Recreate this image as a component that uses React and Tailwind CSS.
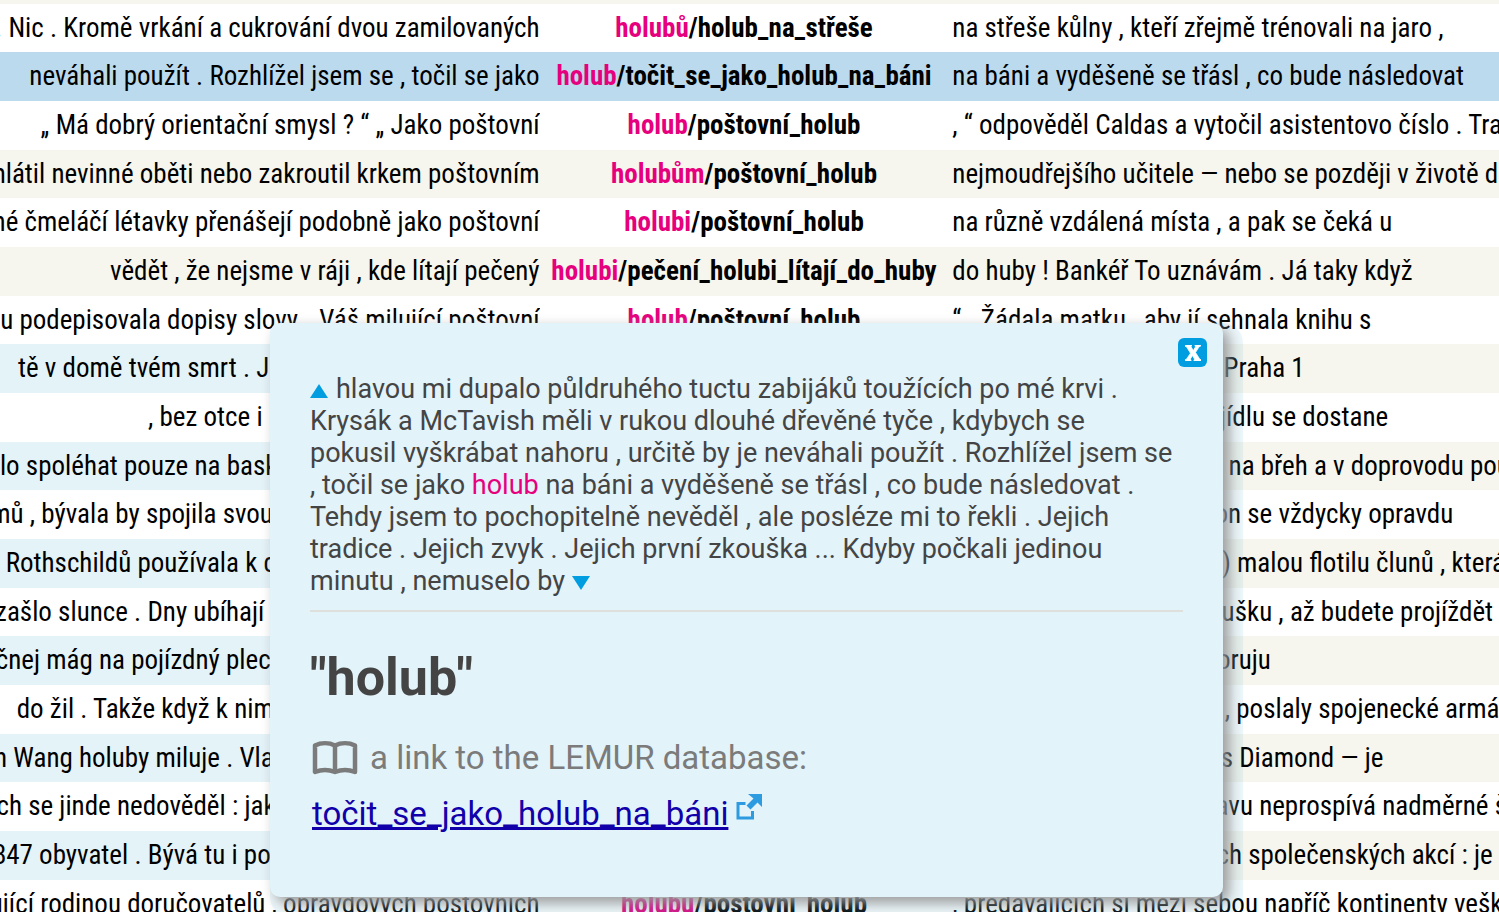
const FIRST_COLLOCATE_ROW = 7;

const rows = [
  { left: ". Nic . Kromě vrkání a cukrování dvou zamilovaných", hit: "holubů", lemma: "holub_na_střeše", right: "na střeše kůlny , kteří zřejmě trénovali na jaro ," },
  { left: "neváhali použít . Rozhlížel jsem se , točil se jako", hit: "holub", lemma: "točit_se_jako_holub_na_báni", right: "na báni a vyděšeně se třásl , co bude následovat", active: true },
  { left: "„ Má dobrý orientační smysl ? “ „ Jako poštovní", hit: "holub", lemma: "poštovní_holub", right: ", “ odpověděl Caldas a vytočil asistentovo číslo . Trask" },
  { left: "mlátil nevinné oběti nebo zakroutil krkem poštovním", hit: "holubům", lemma: "poštovní_holub", right: "nejmoudřejšího učitele — nebo se později v životě dostal" },
  { left: "drobné čmeláčí létavky přenášejí podobně jako poštovní", hit: "holubi", lemma: "poštovní_holub", right: "na různě vzdálená místa , a pak se čeká u" },
  { left: "vědět , že nejsme v ráji , kde lítají pečený", hit: "holubi", lemma: "pečení_holubi_lítají_do_huby", right: "do huby ! Bankéř To uznávám . Já taky když" },
  { left: "dobu podepisovala dopisy slovy „ Váš milující poštovní", hit: "holub", lemma: "poštovní_holub", right: "“ . Žádala matku , aby jí sehnala knihu s" },
  { left: "tě v domě tvém smrt . Jako když přiletěl poštovní", hit: "holub", lemma: "poštovní_holub", right: "a přinesl dopis na adresy Praha 1" },
  { left: ", bez otce i hnízda jako malí poštovní", hit: "holub", lemma: "poštovní_holub", right: "a kdo se až bude první, k jídlu se dostane" },
  { left: "bylo spoléhat pouze na baskické společné a poštovní", hit: "holuby", lemma: "poštovní_holub", right: "kteří je jen doprovázeli až na břeh a v doprovodu pouze" },
  { left: "domů , bývala by spojila svou zprávu vždy s poštovním", hit: "holubem", lemma: "poštovní_holub", right: "ale to by se musel také i on se vždycky opravdu" },
  { left: "rodina Rothschildů používala k dobrým dopisům poštovní", hit: "holuby", lemma: "poštovní_holub", right: "a také ( pro jistotu ještě i ) malou flotilu člunů , která" },
  { left: "zašlo slunce . Dny ubíhají . Pošlete tedy poštovního", hit: "holuba", lemma: "poštovní_holub", right: "a vezměte s sebou tu zkoušku , až budete projíždět" },
  { left: "srdečnej mág na pojízdný plechovce , jako slabý pečený", hit: "holuby", lemma: "poštovní_holub", right: "do huby a já je tu si podporuju" },
  { left: "do žil . Takže když k nim přiletěl zraněný poštovní", hit: "holub", lemma: "poštovní_holub", right: "který přinesl tuhle zprávu , poslaly spojenecké armády" },
  { left: "John Wang holuby miluje . Vlastní také krásné poštovní", hit: "holuby", lemma: "poštovní_holub", right: "a první z nich se jmenuje s Diamond — je" },
  { left: "bych se jinde nedověděl : jak se jeho bílým poštovním", hit: "holubům", lemma: "poštovní_holub", right: "daří a že jejich celému stavu neprospívá nadměrné šlechtění" },
  { left: "1847 obyvatel . Bývá tu i posádka malých poštovních", hit: "holubů", lemma: "poštovní_holub", right: "a dějiště už mnoha různých společenských akcí : je však" },
  { left: "pečující rodinou doručovatelů , opravdových poštovních", hit: "holubů", lemma: "poštovní_holub", right: ", předávajících si mezi sebou napříč kontinenty veškeré" },
];

function ConcordanceRow({ row, index }) {
  const striped = index % 2 === 1;
  const rowBg = row.active ? "bg-[#bbdaee]" : striped ? "bg-[#f7f6ee]" : "bg-white";
  const leftBg = striped && index >= FIRST_COLLOCATE_ROW ? "bg-[#e4f3f8]" : "";
  return (
    <tr className={`align-top ${rowBg} ${index % 3 === 0 ? "h-12" : "h-[49px]"}`}>
      <td className={`p-0 pt-2 ${leftBg}`}>
        <div className="flex justify-end overflow-hidden">
          <span className="shrink-0">{row.left}</span>
        </div>
      </td>
      <td className="p-0 pt-2 pl-1 text-center font-bold">
        <span className="text-[#e6007e]">{row.hit}</span>/{row.lemma}
      </td>
      <td className="overflow-hidden p-0 pt-2 pl-2">{row.right}</td>
    </tr>
  );
}

function BookIcon() {
  return (
    <svg viewBox="0 0 46 34" className="h-[34px] w-[46px] shrink-0" fill="none" stroke="#7b7b7b" strokeWidth="4.500" strokeLinejoin="round" aria-hidden="true">
      <path d="M3 4.500C9 1.500 17 1.500 23 4.500C29 1.500 37 1.500 43 4.500V31C37 28.500 29 28.500 23 31C17 28.500 9 28.500 3 31Z" />
      <path d="M23 4V31" />
    </svg>
  );
}

function ExternalIcon() {
  return (
    <svg viewBox="0 0 26 26" className="h-[26px] w-[26px] shrink-0" aria-hidden="true">
      <path d="M9.500 9.500H2V24H16.500V17" fill="none" stroke="#2c9be0" strokeWidth="3" />
      <path d="M12 0H26V13L21.500 8.500L14.500 15.500L10.500 11.500L17.500 4.500Z" fill="#2c9be0" />
    </svg>
  );
}

function DetailPanel() {
  return (
    <section
      role="dialog"
      aria-labelledby="detail-title"
      className="absolute top-[319px] left-[270px] h-[574px] w-[953px] rounded-[10px] bg-[#e2f3fa] px-10 pt-[50px] font-['Roboto',sans-serif] text-[#444] shadow-[6px_6px_14px_#999,10px_10px_0_10px_rgba(0,150,210,0.07)]"
    >
      <button type="button" aria-label="Close" className="absolute top-[15px] right-4 flex h-[29px] w-[29px] items-center justify-center rounded-md bg-[#009ee0]">
        <svg viewBox="0 0 16 16" className="h-4 w-4" aria-hidden="true">
          <path d="M0 0H6.500V1.200L5.800 1.500L8.300 5.500L10.800 1.500L10 1.200V0H15.500V1.200L14 1.800L10.500 7.500L14.800 14.300L16 14.800V16H9V14.800L9.800 14.500L7.500 10.500L5 14.500L6 14.800V16H0V14.800L1.500 14.200L5.500 8.200L1.500 1.700L0 1.200Z" fill="#fff" stroke="#fff" strokeWidth="0.800" />
        </svg>
      </button>
      <p className="border-b-2 border-[#dfe0dc] pb-[13px] text-[27px] leading-8 whitespace-nowrap">
        <button type="button" aria-label="Expand up" className="mr-2 inline-block">
          <svg viewBox="0 0 18 14" className="h-[14px] w-[18px]" aria-hidden="true"><path d="M9 0L18 14H0Z" fill="#009ee0" /></svg>
        </button>
        hlavou mi dupalo půldruhého tuctu zabijáků toužících po mé krvi .<br />
        Krysák a McTavish měli v rukou dlouhé dřevěné tyče , kdybych se<br />
        pokusil vyškrábat nahoru , určitě by je neváhali použít . Rozhlížel jsem se<br />
        , točil se jako <span className="text-[#e6007e]">holub</span> na báni a vyděšeně se třásl , co bude následovat .<br />
        Tehdy jsem to pochopitelně nevěděl , ale posléze mi to řekli . Jejich<br />
        tradice . Jejich zvyk . Jejich první zkouška ... Kdyby počkali jedinou<br />
        minutu , nemuselo by{" "}
        <button type="button" aria-label="Expand down" className="inline-block">
          <svg viewBox="0 0 18 14" className="h-[14px] w-[18px]" aria-hidden="true"><path d="M0 0H18L9 14Z" fill="#009ee0" /></svg>
        </button>
      </p>
      <h1 id="detail-title" className="mt-9 text-[52px] leading-[60px] font-bold">"holub"</h1>
      <div className="mt-[30px] flex items-center gap-3 pl-0.5 text-[33px] leading-10 text-[#7b7b7b]">
        <BookIcon />
        <h2>a link to the LEMUR database:</h2>
      </div>
      <div className="mt-4 flex items-start gap-2 pl-0.5 text-[33px] leading-10">
        <a href="#lemur" className="text-[#1100aa] underline decoration-[3px]">točit_se_jako_holub_na_báni</a>
        <ExternalIcon />
      </div>
    </section>
  );
}

export default function App() {
  return (
    <main className="relative h-screen overflow-hidden border-t-4 border-[#f7f6ee] bg-white">
      <table className="w-full table-fixed border-collapse font-['Roboto_Condensed','Liberation_Sans_Narrow',sans-serif] text-[27px] leading-8 whitespace-nowrap text-black">
        <colgroup>
          <col className="w-[36%]" />
          <col className="w-[27%]" />
          <col className="w-[37%]" />
        </colgroup>
        <tbody>
          {rows.map((row, index) => (
            <ConcordanceRow key={index} row={row} index={index} />
          ))}
        </tbody>
      </table>
      <DetailPanel />
    </main>
  );
}
